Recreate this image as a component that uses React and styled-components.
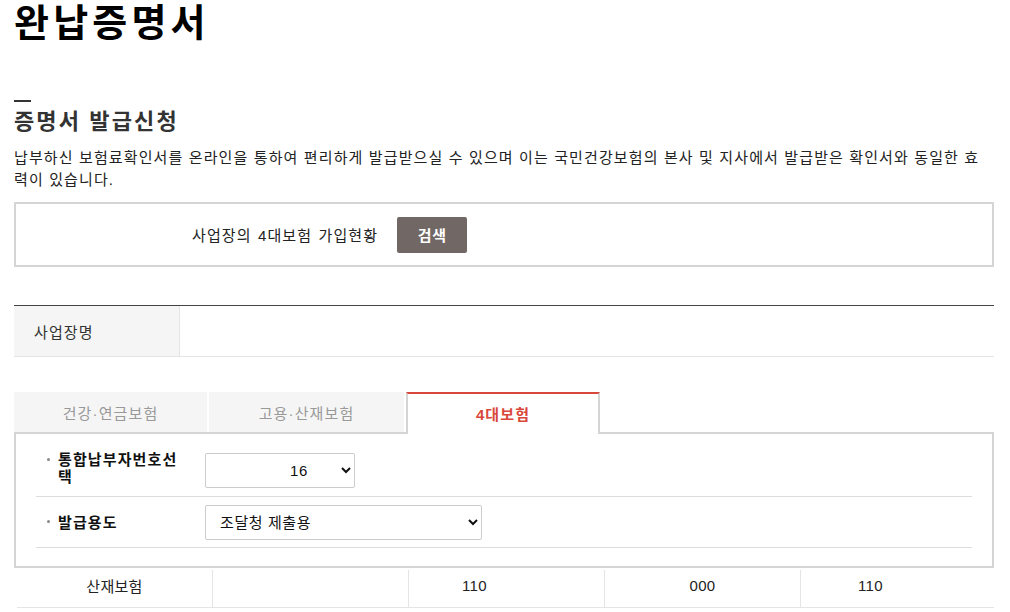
import React from "react";
import styled, { createGlobalStyle } from "styled-components";

const GlobalStyle = createGlobalStyle`
  body {
    margin: 0;
    background: #fff;
    color: #222;
    font-family: "Liberation Sans", "Noto Sans CJK KR", sans-serif;
    letter-spacing: 0.07em;
  }
  * {
    box-sizing: border-box;
  }
`;

const Page = styled.div`
  width: 980px;
  margin-left: 14px;
`;

const Title = styled.h1`
  margin: 0;
  font-size: 38px;
  line-height: 46px;
  font-weight: 700;
  letter-spacing: 0.11em;
  color: #000;
`;

const Section = styled.div`
  margin-top: 54px;
`;

const Bar = styled.div`
  width: 17px;
  height: 2px;
  background: #333;
`;

const Heading = styled.h2`
  margin: 5px 0 0;
  font-size: 22px;
  line-height: 30px;
  font-weight: 700;
  letter-spacing: 0.097em;
  color: #333;
`;

const Lead = styled.p`
  margin: 10px 0 0;
  font-size: 15px;
  line-height: 22px;
  letter-spacing: 0.075em;
  color: #222;
`;

const SearchBox = styled.div`
  margin-top: 11px;
  height: 65px;
  border: 2px solid #d5d5d5;
  display: flex;
  align-items: center;
  gap: 19px;
  padding-left: 176px;
  font-size: 15px;
  word-spacing: 1px;
`;

const Button = styled.button`
  width: 70px;
  height: 36px;
  border: 0;
  border-radius: 2px;
  background: #716764;
  color: #fff;
  font-family: inherit;
  font-size: 15px;
  font-weight: 700;
  letter-spacing: 0.04em;
  cursor: pointer;
`;

const InfoTable = styled.div`
  margin-top: 38px;
  border-top: 1px solid #444;
  border-bottom: 1px solid #e5e5e5;
  display: grid;
  grid-template-columns: 166px 1fr;
  height: 52px;
`;

const InfoHead = styled.div`
  background: #f5f5f5;
  border-right: 1px solid #e5e5e5;
  display: flex;
  align-items: center;
  padding-left: 20px;
  font-size: 15px;
  color: #333;
`;

const InfoCell = styled.div``;

const Tabs = styled.div`
  margin-top: 35px;
  display: flex;
  gap: 2px;
  align-items: flex-end;
`;

const Tab = styled.div`
  width: ${(p) => p.$w}px;
  height: ${(p) => (p.$active ? 42 : 40)}px;
  display: flex;
  align-items: center;
  justify-content: center;
  font-size: 15px;
  position: relative;
  z-index: 1;
  ${(p) =>
    p.$active
      ? `
    background: #fff;
    color: #d9473b;
    font-weight: 700;
    border: 2px solid #d5d5d5;
    border-top-color: #d9473b;
    border-bottom: 0;
    margin-bottom: -2px;
    padding-bottom: 2px;
  `
      : `
    background: #f5f5f5;
    color: #999;
  `}
`;

const Panel = styled.div`
  border: 2px solid #d5d5d5;
  padding: 0 20px 18px;
`;

const FormRow = styled.div`
  display: flex;
  align-items: center;
  height: ${(p) => p.$h}px;
  border-bottom: 1px solid #ddd;
`;

const Label = styled.div`
  width: 169px;
  flex: none;
  padding: ${(p) => p.$offset || 0}px 25px 0 22px;
  position: relative;
  font-size: 15px;
  line-height: 17px;
  font-weight: 700;
  color: #111;
  &::before {
    content: "";
    position: absolute;
    left: 11px;
    top: ${(p) => p.$dot}px;
    width: 3px;
    height: 3px;
    border-radius: 50%;
    background: #888;
  }
`;

const Field = styled.div`
  padding-top: ${(p) => p.$offset || 0}px;
`;

const Select = styled.select`
  width: ${(p) => p.$w}px;
  height: 35px;
  border: 1px solid #ccc;
  border-radius: 2px;
  background: #fff;
  color: #111;
  font-family: inherit;
  font-size: 15px;
  letter-spacing: 0.04em;
  padding: 0 8px 0 ${(p) => p.$indent || 10}px;
`;

const DataRow = styled.div`
  margin-left: 3px;
  display: grid;
  grid-template-columns: 195px 196px 196px 196px 1fr;
  height: 40px;
  border-bottom: 1px solid #e5e5e5;
`;

const DataCell = styled.div`
  display: flex;
  align-items: center;
  justify-content: center;
  font-size: 15px;
  letter-spacing: 0.02em;
  color: #222;
  padding-bottom: 6px;
  padding-right: ${(p) => p.$shift || 0}px;
  border-left: ${(p) => (p.$first ? "0" : "1px solid #e5e5e5")};
  margin-top: 2px;
`;

export default function App() {
  return (
    <>
      <GlobalStyle />
      <Page>
        <Title>완납증명서</Title>
        <Section>
          <Bar />
          <Heading>증명서 발급신청</Heading>
          <Lead>
            납부하신 보험료확인서를 온라인을 통하여 편리하게 발급받으실 수 있으며 이는 국민건강보험의 본사 및 지사에서 발급받은 확인서와 동일한 효력이 있습니다.
          </Lead>
          <SearchBox>
            <span>사업장의 4대보험 가입현황</span>
            <Button type="button">검색</Button>
          </SearchBox>
          <InfoTable>
            <InfoHead>사업장명</InfoHead>
            <InfoCell />
          </InfoTable>
          <Tabs>
            <Tab $w={193}>건강·연금보험</Tab>
            <Tab $w={195}>고용·산재보험</Tab>
            <Tab $w={194} $active>
              4대보험
            </Tab>
          </Tabs>
          <Panel>
            <FormRow $h={63}>
              <Label $dot={12} $offset={5}>
                통합납부자번호선택
              </Label>
              <Field $offset={11}>
                <Select $w={150} $indent={80} defaultValue="16">
                  <option value="16">16</option>
                </Select>
              </Field>
            </FormRow>
            <FormRow $h={51}>
              <Label $dot={6}>발급용도</Label>
              <Field>
                <Select $w={277} defaultValue="a">
                  <option value="a">조달청 제출용</option>
                </Select>
              </Field>
            </FormRow>
          </Panel>
          <DataRow>
            <DataCell $first>산재보험</DataCell>
            <DataCell />
            <DataCell $shift={64}>110</DataCell>
            <DataCell>000</DataCell>
            <DataCell $shift={54}>110</DataCell>
          </DataRow>
        </Section>
      </Page>
    </>
  );
}
